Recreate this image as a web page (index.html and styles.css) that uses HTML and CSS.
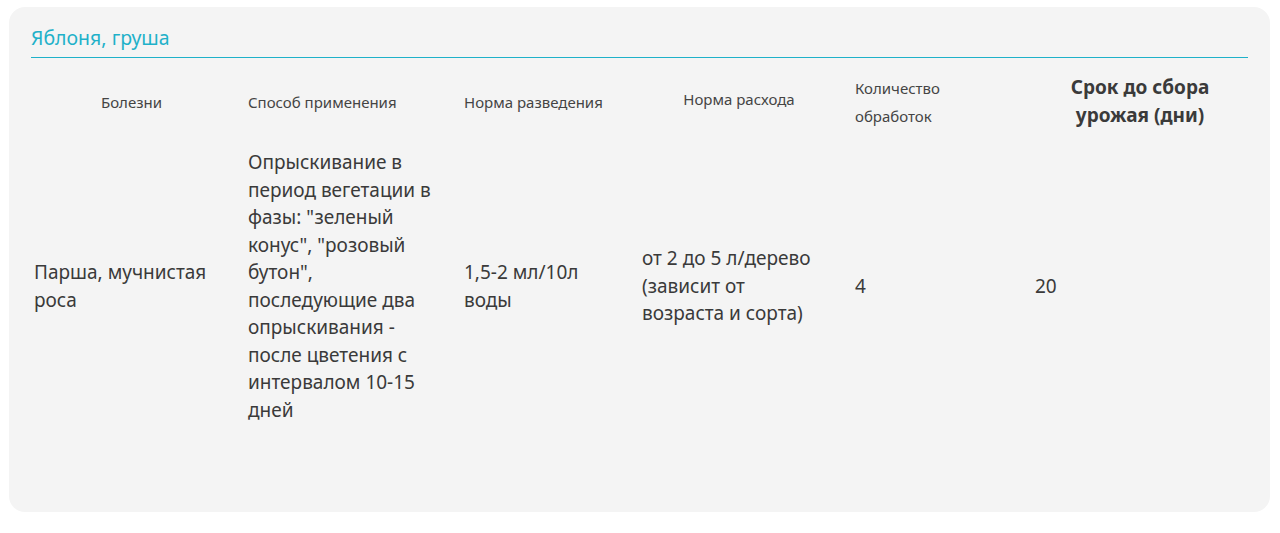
FILE: index.html
```html
<!DOCTYPE html>
<html lang="ru">
<head>
  <meta charset="utf-8">
  <title>Яблоня, груша</title>
  <meta name="viewport" content="width=device-width, initial-scale=1.0">
  <link rel="stylesheet" href="styles.css">
</head>
<body>
  <div class="card">
    <h2 class="culture-title">Яблоня, груша</h2>

    <!-- Таблица применения -->
    <table class="usage-table">
      <colgroup>
        <col class="col-disease">
        <col class="col-method">
        <col class="col-dilution">
        <col class="col-rate">
        <col class="col-count">
        <col class="col-term">
      </colgroup>
      <thead>
        <tr>
          <th class="th-center">Болезни</th>
          <th>Способ применения</th>
          <th>Норма разведения</th>
          <th class="th-center th-raised">Норма расхода</th>
          <th class="th-narrow">Количество обработок</th>
          <th class="th-center th-bold">Срок до сбора урожая (дни)</th>
        </tr>
      </thead>
      <tbody>
        <tr>
          <td>Парша, мучнистая роса</td>
          <td class="td-method">Опрыскивание в период вегетации в фазы: "зеленый конус", "розовый бутон", последующие два опрыскивания - после цветения с интервалом 10-15 дней</td>
          <td>1,5-2 мл/10л воды</td>
          <td class="td-rate">от 2 до 5 л/дерево (зависит от возраста и сорта)</td>
          <td>4</td>
          <td>20</td>
        </tr>
      </tbody>
    </table>
  </div>
</body>
</html>
```

FILE: styles.css
```css
/* Карточка культуры с таблицей */
body {
  margin: 0;
  padding: 7px 10px 0 9px;
  font-family: "Noto Sans", Arial, sans-serif;
  background: #fff;
  color: #3a3a3a;
}
.card {
  background: #f4f4f4;
  border-radius: 16px;
  padding: 19px 22px 78px 22px;
}
.culture-title {
  margin: 0 0 9px;
  padding-bottom: 7px;
  border-bottom: 1px solid #1fb1c9;
  font-size: 19.5px;
  line-height: 24px;
  font-weight: 400;
  color: #1fb1c9;
}
.usage-table {
  width: 100%;
  border-collapse: collapse;
  table-layout: fixed;
}
.col-disease { width: 214px; }
.col-method { width: 216px; }
.col-dilution { width: 178px; }
.col-rate { width: 213px; }
.col-count { width: 180px; }
.col-term { width: auto; }

.usage-table th {
  padding: 7px 16px 9px 3px;
  font-size: 15px;
  line-height: 28px;
  font-weight: 400;
  color: #444;
  text-align: left;
  vertical-align: middle;
}
.usage-table th.th-center {
  text-align: center;
}
.usage-table th.th-raised {
  padding-bottom: 16px;
}
.usage-table th.th-narrow {
  padding-right: 60px;
}
.usage-table th.th-bold {
  padding: 6px 33px 10px;
  font-size: 19px;
  font-weight: 700;
  color: #3a3a3a;
}
.usage-table td {
  padding: 10px 18px 10px 3px;
  font-size: 19px;
  line-height: 27.5px;
  vertical-align: middle;
}
.usage-table td.td-method {
  padding-right: 23px;
}
.usage-table td.td-rate {
  padding-right: 30px;
}
```
